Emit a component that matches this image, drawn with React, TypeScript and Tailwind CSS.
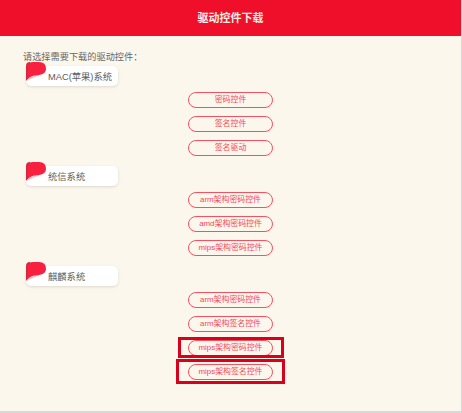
const font = "font-['Liberation_Sans','Noto_Sans_CJK_SC',sans-serif]";

const groups = [
  { name: "MAC(苹果)系统", items: [{ label: "密码控件" }, { label: "签名控件" }, { label: "签名驱动" }] },
  { name: "统信系统", items: [{ label: "arm架构密码控件" }, { label: "amd架构密码控件" }, { label: "mips架构密码控件" }] },
  {
    name: "麒麟系统",
    items: [
      { label: "arm架构密码控件" },
      { label: "arm架构签名控件" },
      { label: "mips架构密码控件", mark: "a" },
      { label: "mips架构签名控件", mark: "b" },
    ],
  },
];

function Flag() {
  return (
    <svg className="absolute left-0 top-[-4px]" width="20" height="19" viewBox="0 0 20 19">
      <path d="M0 4 Q0 0 4 0 L4 15 L0 19 Z" fill="#d42a40" />
      <path d="M2 17 Q8 12.5 14 13 L0 19 Z" fill="#e9c3c6" />
      <path d="M2 5 Q2 0 7 0 L13 0 Q20 0 20 7 Q20 12 13 13 Q7 13 2 16 Z" fill="#f8203f" />
    </svg>
  );
}

function GroupTitle({ name }: { name: string }) {
  return (
    <div className="relative ml-[3px] flex h-[20px] w-[92px] items-center rounded-[5px] bg-white pl-[22px] pt-[3px] text-[9.3px] text-[#5c5c5c] shadow-[0_1px_3px_rgba(0,0,0,0.12)]">
      <Flag />
      <span>{name}</span>
    </div>
  );
}

function DownloadButton({ label, mark }: { label: string; mark?: string }) {
  return (
    <div className="relative h-[16px] w-[85px]">
      <button className="flex h-full w-full items-center justify-center rounded-full border border-[#f9505f] text-[7.9px] text-[#f5475a]">
        {label}
      </button>
      {mark === "a" && (
        <div className="absolute left-[-10px] top-[-3px] h-[21px] w-[106px] border-[3px] border-[#d9001b]" />
      )}
      {mark === "b" && (
        <div className="absolute left-[-12px] top-[-5px] h-[25px] w-[109px] border-[3px] border-[#d9001b]" />
      )}
    </div>
  );
}

export default function App() {
  return (
    <div className={`${font} h-[413px] w-[462px] overflow-hidden bg-[#d8d8d8]`}>
      <div className="h-[411px] w-[461px] bg-[#fcf7ec]">
        <div className="flex h-[36px] items-center justify-center bg-[#f00f2b] text-[11px] font-bold text-[#fdf0e6]">
          驱动控件下载
        </div>
        <div className="px-[23px] pt-[14px]">
          <p className="h-[16px] text-[9.2px] leading-[14px] text-[#666]">请选择需要下载的驱动控件：</p>
          <div className="flex flex-col gap-[10px]">
            {groups.map((g) => (
              <div key={g.name}>
                <GroupTitle name={g.name} />
                <div className="mt-[6px] flex flex-col items-center gap-[8px]">
                  {g.items.map((it) => (
                    <DownloadButton key={it.label} label={it.label} mark={it.mark} />
                  ))}
                </div>
              </div>
            ))}
          </div>
        </div>
      </div>
    </div>
  );
}
